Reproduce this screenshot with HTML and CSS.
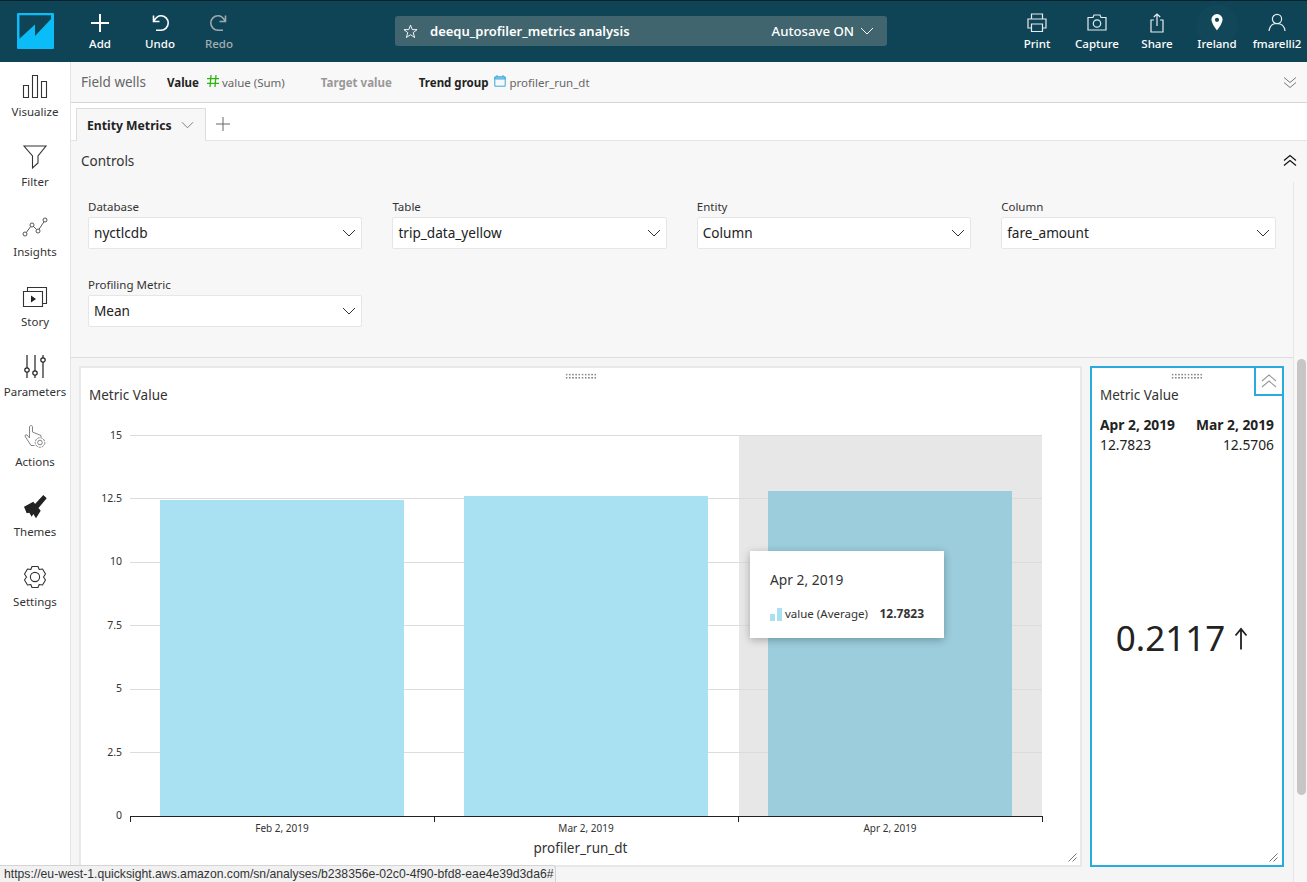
FILE: index.html
```html
<!DOCTYPE html>
<html lang="en">
<head>
<meta charset="utf-8">
<title>deequ_profiler_metrics analysis</title>
<link rel="stylesheet" href="styles.css">
</head>
<body>
<header class="topbar">
  <div class="logo-cell">
    <svg class="logo" viewBox="0 0 37 36"><rect width="37" height="36" rx="1" fill="#0abdf8"/><path d="M2.5 2.3H34V6L18 23V11.5L2.5 25.7Z" fill="#0f4457"/></svg>
  </div>
  <a class="tool"><svg class="ticon" viewBox="0 0 24 20"><path d="M12 1V19M3 10H21" stroke="#fff" stroke-width="2" fill="none"/></svg><span>Add</span></a>
  <a class="tool"><svg class="ticon" viewBox="0 0 24 20"><path d="M5.5 2.5V8.5H11.5M6 8C8 4 10.5 2.8 13 2.8A7.2 7.2 0 0 1 13 17.2H8" stroke="#fff" stroke-width="1.6" fill="none"/></svg><span>Undo</span></a>
  <a class="tool tool-off"><svg class="ticon" viewBox="0 0 24 20"><path d="M18.5 2.5V8.5H12.5M18 8C16 4 13.5 2.8 11 2.8A7.2 7.2 0 0 0 11 17.2H16" stroke="#9fa9ae" stroke-width="1.6" fill="none"/></svg><span>Redo</span></a>
  <div class="titlebar">
    <svg class="star" viewBox="0 0 16 16"><path d="M8 1.2L9.9 6H15L10.9 9.2L12.4 14.4L8 11.4L3.6 14.4L5.1 9.2L1 6H6.1Z" stroke="#fff" fill="none"/></svg>
    <span class="title-name">deequ_profiler_metrics analysis</span>
    <span class="autosave">Autosave ON</span>
    <svg class="title-chev" viewBox="0 0 14 8"><path d="M1 1L7 7L13 1" stroke="#fff" fill="none"/></svg>
  </div>
  <div class="tools-right">
    <a class="tool"><svg class="ticon" viewBox="0 0 24 20"><path d="M6.5 6V1H17.500V6M6.500 15H3V6H21V15H17.500M6.500 11H17.500V18.500H6.500Z" stroke="#e6ecee" stroke-width="1.2" fill="none"/></svg><span>Print</span></a>
    <a class="tool"><svg class="ticon" viewBox="0 0 24 20"><path d="M3 4.500H8L9 2H15L16 4.500H21V17H3Z" stroke="#e6ecee" stroke-width="1.2" fill="none"/><circle cx="12" cy="10.500" r="3.700" stroke="#e6ecee" stroke-width="1.2" fill="none"/></svg><span>Capture</span></a>
    <a class="tool"><svg class="ticon" viewBox="0 0 24 20"><path d="M9 7H6V19H18V7H15M12 13V1M8.800 4L12 1L15.200 4" stroke="#e6ecee" stroke-width="1.2" fill="none"/></svg><span>Share</span></a>
    <a class="tool tool-region"><svg class="ticon" viewBox="0 0 24 20"><path fill-rule="evenodd" d="M12 1A5.600 5.600 0 0 0 6.400 6.600C6.400 10.500 12 17.500 12 17.500S17.600 10.500 17.600 6.600A5.600 5.600 0 0 0 12 1ZM12 4.700A2.100 2.100 0 1 1 12 8.900A2.100 2.100 0 0 1 12 4.700Z" fill="#fff"/></svg><span>Ireland</span></a>
    <a class="tool"><svg class="ticon" viewBox="0 0 24 20"><circle cx="12" cy="6" r="4.600" stroke="#e6ecee" stroke-width="1.2" fill="none"/><path d="M4 18C4.500 13.500 7.500 10.500 12 10.500S19.500 13.500 20 18" stroke="#e6ecee" stroke-width="1.2" fill="none"/></svg><span>fmarelli2</span></a>
  </div>
</header>

<div class="shell">
  <nav class="sidebar">
    <a class="side-item"><svg class="sicon" viewBox="0 0 26 24"><path d="M1.500 10.500H6.500V22.500H1.500ZM10.500 .5H15.500V22.500H10.500ZM19.500 6.500H24.500V22.500H19.500Z" stroke="#333" stroke-width="1.1" fill="none"/></svg><span>Visualize</span></a>
    <a class="side-item"><svg class="sicon" viewBox="0 0 26 24"><path d="M2 1H24L16 11V18L10.500 23V11Z" stroke="#333" stroke-width="1.1" fill="none"/></svg><span>Filter</span></a>
    <a class="side-item"><svg class="sicon" viewBox="0 0 26 24"><g stroke="#444" stroke-width=".9" fill="none"><circle cx="3" cy="19" r="2"/><circle cx="10" cy="10" r="2"/><circle cx="16" cy="16" r="2"/><circle cx="23" cy="5" r="2"/><path d="M4.300 17.500L8.700 11.500M11.500 11.500L14.500 14.500M17 14.300L22 6.700"/></g></svg><span>Insights</span></a>
    <a class="side-item"><svg class="sicon" viewBox="0 0 26 24"><path d="M1.500 6.500H20.500V21.500H1.500ZM5.500 6.500V2.500H24.500V18.500H20.500" stroke="#333" stroke-width="1.1" fill="none"/><path d="M9 10.500L14 14L9 17.500Z" fill="#222"/></svg><span>Story</span></a>
    <a class="side-item"><svg class="sicon" viewBox="0 0 26 24"><g stroke="#222" stroke-width="1.2" fill="#fff"><path d="M5 0V23M13 0V23M21 0V23"/><circle cx="5" cy="15" r="2.200"/><circle cx="13" cy="18" r="2.200"/><circle cx="21" cy="5" r="2.200"/></g></svg><span>Parameters</span></a>
    <a class="side-item"><svg class="sicon" viewBox="0 0 26 24"><g stroke="#777" stroke-width=".9" fill="none"><path d="M7.500 13V2C7.500 0 10.500 0 10.500 2V7L19 10.500V12M7.500 13L5 10C3.500 9 2.500 10.500 3.500 12L9 20.500H12.500"/><circle cx="18" cy="17.500" r="4.800" stroke-dasharray="2.400 .8"/><circle cx="18" cy="17.500" r="2.300"/></g></svg><span>Actions</span></a>
    <a class="side-item"><svg class="sicon" viewBox="0 0 26 24"><path d="M21.300 0L24.700 3.300L16.300 13.300L13 9Z M11.300 6.700L18.700 15.700L14 23.300L11.300 19L9.700 21.700L7.300 17.700L4.700 18.300L2 11.700Z" fill="#222"/></svg><span>Themes</span></a>
    <a class="side-item"><svg class="sicon" viewBox="0 0 26 24"><path d="M10 1.500H16L17.200 4.500L20.500 4L23.500 9L21.500 12L23.500 15L20.500 20L17.200 19.500L16 22.500H10L8.800 19.500L5.500 20L2.500 15L4.500 12L2.500 9L5.500 4L8.800 4.500Z" stroke="#333" stroke-width="1.1" stroke-linejoin="round" fill="none"/><circle cx="13" cy="12" r="4.600" stroke="#333" stroke-width="1.1" fill="none"/></svg><span>Settings</span></a>
  </nav>

  <main class="main">
    <section class="wells">
      <span class="wells-title">Field wells</span>
      <b class="well-key well-value">Value</b>
      <svg class="well-hash" viewBox="0 0 12 12"><path d="M4 0L3 12M9 0L8 12M0 3.700H12M0 8.300H12" stroke="#2fb50f" stroke-width="1.3" fill="none"/></svg>
      <span class="well-field">value (Sum)</span>
      <b class="well-key well-target">Target value</b>
      <b class="well-key well-trend">Trend group</b>
      <svg class="well-cal" viewBox="0 0 12 12"><path d="M.8 2H11.200V11.200H.8Z" stroke="#3ca9dd" fill="none"/><path d="M.8 2H11.200V4H.8ZM3 0V2M9 0V2" stroke="#3ca9dd" fill="#9fd5ef"/></svg>
      <span class="well-field">profiler_run_dt</span>
      <svg class="dbl-chev" viewBox="0 0 14 13"><path d="M1 1.500L7 6.500L13 1.500M1 6.500L7 11.500L13 6.500" stroke="#777" fill="none"/></svg>
    </section>

    <section class="tabs">
      <div class="tab">
        <span>Entity Metrics</span>
        <svg class="tab-chev" viewBox="0 0 14 8"><path d="M1 1L7 7L13 1" stroke="#777" fill="none"/></svg>
      </div>
      <svg class="tab-add" viewBox="0 0 14 14"><path d="M7 0V14M0 7H14" stroke="#666" fill="none"/></svg>
    </section>

    <section class="controls-head">
      <span>Controls</span>
      <svg class="dbl-chev" viewBox="0 0 14 13"><path d="M1 6.500L7 1.500L13 6.500M1 11.500L7 6.500L13 11.500" stroke="#111" stroke-width="1.200" fill="none"/></svg>
    </section>

    <div class="scroller">
      <div class="scroll-content">
        <section class="controls">
          <div class="control"><label>Database</label><div class="select"><span>nyctlcdb</span><svg viewBox="0 0 14 8"><path d="M1 1L7 7L13 1" stroke="#333" fill="none"/></svg></div></div>
          <div class="control"><label>Table</label><div class="select"><span>trip_data_yellow</span><svg viewBox="0 0 14 8"><path d="M1 1L7 7L13 1" stroke="#333" fill="none"/></svg></div></div>
          <div class="control"><label>Entity</label><div class="select"><span>Column</span><svg viewBox="0 0 14 8"><path d="M1 1L7 7L13 1" stroke="#333" fill="none"/></svg></div></div>
          <div class="control"><label>Column</label><div class="select"><span>fare_amount</span><svg viewBox="0 0 14 8"><path d="M1 1L7 7L13 1" stroke="#333" fill="none"/></svg></div></div>
          <div class="control"><label>Profiling Metric</label><div class="select"><span>Mean</span><svg viewBox="0 0 14 8"><path d="M1 1L7 7L13 1" stroke="#333" fill="none"/></svg></div></div>
        </section>

        <section class="sheet">
          <article class="visual chart-visual">
            <div class="grip"></div>
            <h2 class="visual-title">Metric Value</h2>
            <svg class="chart" viewBox="81 415 998 449">
              <rect x="739" y="435" width="303" height="381" fill="#e7e7e7"/>
              <path d="M130 435.500H1042M130 498.500H1042M130 562.500H1042M130 625.500H1042M130 689.500H1042M130 752.500H1042" stroke="#dcdcdc"/>
              <rect x="160" y="500" width="244" height="316" fill="#a9e1f3"/>
              <rect x="464" y="496" width="244" height="320" fill="#a9e1f3"/>
              <rect x="768" y="491" width="244" height="325" fill="#9bcddd"/>
              <path d="M130 816.500H1042M130.500 816V822M434.500 816V822M738.500 816V822M1042.500 816V822" stroke="#222" fill="none"/>
              <g class="axis-y">
                <text x="122" y="439">15</text>
                <text x="122" y="502">12.5</text>
                <text x="122" y="565">10</text>
                <text x="122" y="629">7.5</text>
                <text x="122" y="692">5</text>
                <text x="122" y="756">2.5</text>
                <text x="122" y="819">0</text>
              </g>
              <g class="axis-x">
                <text x="282" y="832">Feb 2, 2019</text>
                <text x="586" y="832">Mar 2, 2019</text>
                <text x="890" y="832">Apr 2, 2019</text>
              </g>
              <text class="axis-name" x="580.500" y="853">profiler_run_dt</text>
            </svg>
            <div class="tip">
              <div class="tip-date">Apr 2, 2019</div>
              <div class="tip-row">
                <svg class="tip-key" viewBox="0 0 12 13"><rect y="6" width="5" height="7" fill="#a9e1f3"/><rect x="7" width="5" height="13" fill="#a9e1f3"/></svg>
                <span class="tip-name">value (Average)</span>
                <b>12.7823</b>
              </div>
            </div>
            <svg class="resize" viewBox="0 0 9 9"><path d="M.5 8.500L8.500 .5M4.500 8.500L8.500 4.500" stroke="#777" fill="none"/></svg>
          </article>

          <article class="visual kpi-visual">
            <div class="grip"></div>
            <div class="kpi-toggle"><svg viewBox="0 0 16 14"><path d="M1 7L8 1L15 7M1 13L8 7L15 13" stroke="#999" stroke-width="1.100" fill="none"/></svg></div>
            <h2 class="visual-title">Metric Value</h2>
            <div class="kpi-compare">
              <b>Apr 2, 2019</b><b>Mar 2, 2019</b>
              <span>12.7823</span><span>12.5706</span>
            </div>
            <div class="kpi-big">
              <span>0.2117</span>
              <svg viewBox="0 0 14 22"><path d="M7 22V1.500M1.500 8L7 1.500L12.500 8" stroke="#222" stroke-width="1.800" fill="none"/></svg>
            </div>
            <svg class="resize" viewBox="0 0 9 9"><path d="M.5 8.500L8.500 .5M4.500 8.500L8.500 4.500" stroke="#777" fill="none"/></svg>
          </article>
        </section>
      </div>
      <div class="gutter"><div class="thumb"></div></div>
    </div>
  </main>
</div>

<div class="status">https://eu-west-1.quicksight.aws.amazon.com/sn/analyses/b238356e-02c0-4f90-bfd8-eae4e39d3da6#</div>
</body>
</html>
```

FILE: styles.css
```css
* { box-sizing: border-box; }
html, body { margin: 0; height: 100%; overflow: hidden; }
body {
  font-family: "Noto Sans", "Open Sans", sans-serif;
  color: #222;
  background: #fff;
  display: flex;
  flex-direction: column;
  width: 1307px;
  height: 882px;
}

/* top bar */
.topbar {
  height: 62px;
  flex: none;
  display: flex;
  background: #0f4457;
  border-top: 1px solid #06222c;
  color: #fff;
}
.logo-cell { width: 70px; flex: none; padding: 12px 0 0 17px; }
.logo { width: 37px; height: 36px; display: block; }
.tool {
  width: 60px;
  flex: none;
  display: flex;
  flex-direction: column;
  align-items: center;
  padding-top: 12px;
  font-size: 11.5px;
  font-weight: 500;
  line-height: 16px;
  white-space: nowrap;
}
.ticon { width: 24px; height: 20px; margin-bottom: 3px; display: block; }
.tool-off { color: #a5aeb3; margin-left: -1px; }
.tool-region { background: radial-gradient(circle at 50% 40%, #124759 0 20px, transparent 21px); }
.titlebar {
  width: 492px;
  height: 30px;
  margin: 15px 0 0 146px;
  flex: none;
  background: #41656f;
  border-radius: 3px;
  display: flex;
  align-items: center;
  padding: 0 13px 0 8px;
}
.star { width: 15px; height: 15px; margin-right: 12px; flex: none; }
.title-name { font-weight: 600; font-size: 13px; }
.autosave { margin-left: auto; font-weight: 500; font-size: 13.2px; }
.title-chev { width: 14px; height: 8px; margin-left: 6px; flex: none; }
.tools-right { margin-left: auto; display: flex; }

/* shell */
.shell { flex: 1; display: flex; min-height: 0; }
.sidebar {
  width: 71px;
  flex: none;
  background: #fff;
  border-right: 1px solid #e4e4e4;
  padding-top: 1px;
}
.side-item {
  height: 70px;
  display: flex;
  flex-direction: column;
  align-items: center;
  padding-top: 12px;
  font-size: 11.5px;
  line-height: 16px;
  color: #333;
}
.sicon { width: 26px; height: 24px; margin-bottom: 5px; display: block; }

.main { flex: 1; min-width: 0; display: flex; flex-direction: column; background: #f7f7f7; }

/* field wells */
.wells {
  height: 41px;
  flex: none;
  display: flex;
  align-items: center;
  padding: 0 10px;
  background: #f8f8f8;
  border-bottom: 1px solid #d6d6d6;
  font-size: 11.5px;
}
.wells-title { font-size: 13.5px; color: #666; width: 86px; }
.well-key { font-weight: 700; color: #222; }
.well-value { margin-right: 8px; }
.well-hash { width: 12px; height: 12px; margin: -3px 3px 0 0; }
.well-field { color: #666; }
.well-target { color: #999; margin: 0 27px 0 36px; }
.well-cal { width: 12px; height: 12px; margin: -2px 3px 0 6px; }
.dbl-chev { width: 14px; height: 13px; flex: none; margin-left: auto; }

/* tabs */
.tabs {
  height: 38px;
  flex: none;
  display: flex;
  align-items: flex-end;
  background: #fff;
  border-bottom: 1px solid #e4e4e4;
  padding-left: 5px;
}
.tab {
  width: 130px;
  height: 33px;
  margin-bottom: -1px;
  display: flex;
  align-items: center;
  gap: 9px;
  padding-left: 10px;
  background: #f7f7f7;
  border: 1px solid #dcdcdc;
  border-bottom: 0;
  font-size: 12.2px;
  font-weight: 700;
  color: #222;
}
.tab-chev { width: 13px; height: 8px; }
.tab-add { width: 14px; height: 14px; margin: 0 0 9px 10px; }

/* controls */
.controls-head {
  height: 41px;
  flex: none;
  display: flex;
  align-items: center;
  padding: 0 10px 2px;
  font-size: 13.5px;
  color: #333;
}
.scroller { flex: 1; min-height: 0; display: flex; }
.scroll-content { flex: 1; min-width: 0; display: flex; flex-direction: column; }
.gutter { width: 14px; flex: none; border-left: 1px solid #e6e6e6; padding: 177px 0 0 3px; }
.thumb { width: 9px; height: 436px; background: #c6c6c6; border-radius: 5px; }
.controls {
  height: 176px;
  flex: none;
  display: grid;
  grid-template-columns: repeat(4, 274.4px);
  column-gap: 30px;
  align-content: start;
  row-gap: 27px;
  padding: 16px 0 0 17px;
  border-bottom: 1px solid #dedede;
}
.control label { display: block; font-size: 11.5px; line-height: 18px; color: #333; margin-bottom: 1px; }
.select {
  height: 32px;
  display: flex;
  align-items: center;
  justify-content: space-between;
  padding: 0 5px;
  background: #fff;
  border: 1px solid #e6e6e6;
  border-radius: 2px;
  font-size: 13.6px;
  color: #222;
}
.select span { margin-top: -1px; }
.select svg { width: 14px; height: 8px; flex: none; }

/* visuals */
.sheet {
  flex: 1;
  min-height: 0;
  display: flex;
  gap: 8px;
  padding: 8px 9px 15px 8px;
  background: #f5f5f5;
}
.visual { position: relative; background: #fff; border: 2px solid #e8e8e8; display: flex; flex-direction: column; }
.chart-visual { flex: 1; min-width: 0; }
.kpi-visual { width: 194px; flex: none; border-color: #29abe0; }
.visual-title { margin: 18px 0 0 8px; font-size: 13.5px; line-height: 18px; font-weight: 400; color: #333; height: 29px; flex: none; }
.grip {
  position: absolute;
  top: 5px;
  left: 50%;
  width: 32px;
  height: 6px;
  margin-left: -16px;
  background-image: radial-gradient(circle, #888 0.8px, transparent 1px);
  background-size: 3.2px 3.2px;
}
.chart { width: 998px; height: 449px; display: block; flex: none; }
.chart text { font-family: "Noto Sans", sans-serif; fill: #333; }
.axis-y text { font-size: 10.5px; text-anchor: end; }
.axis-x text { font-size: 10px; text-anchor: middle; }
.chart .axis-name { font-size: 13.5px; text-anchor: middle; }
.tip {
  position: absolute;
  left: 669px;
  top: 183px;
  width: 194px;
  height: 87px;
  padding: 20px 20px 0;
  background: #fff;
  box-shadow: 0 2px 8px rgba(0, 0, 0, .28);
}
.tip-date { font-size: 13.8px; line-height: 18px; color: #333; }
.tip-row { display: flex; align-items: center; margin-top: 17px; font-size: 11.5px; line-height: 16px; color: #333; }
.tip-key { width: 12px; height: 13px; margin-right: 3px; flex: none; }
.tip-name { flex: 1; }
.tip-row b { font-weight: 700; font-size: 12px; }
.resize { position: absolute; right: 3px; bottom: 3px; width: 9px; height: 9px; }
.kpi-visual .resize { right: 4px; }
.kpi-toggle {
  position: absolute;
  top: -2px;
  right: -2px;
  width: 30px;
  height: 30px;
  border: 2px solid #29abe0;
  display: flex;
  align-items: center;
  justify-content: center;
}
.kpi-toggle svg { width: 16px; height: 14px; }
.kpi-compare {
  display: grid;
  grid-template-columns: 1fr auto;
  padding: 0 8px;
  font-size: 13.8px;
  line-height: 20px;
  color: #222;
}
.kpi-compare > :nth-child(even) { text-align: right; }
.kpi-compare b { font-weight: 700; }
.kpi-big {
  display: flex;
  align-items: center;
  justify-content: center;
  gap: 9px;
  margin-top: 161px;
  padding-right: 10px;
  font-size: 35px;
  line-height: 44px;
  color: #222;
}
.kpi-big svg { width: 14px; height: 23px; }

/* link preview */
.status {
  position: fixed;
  left: 0;
  bottom: 0;
  width: 556px;
  height: 17px;
  padding: 0 0 0 4px;
  background: #f1f1f1;
  border: 1px solid #d4d4d4;
  border-left: 0;
  border-bottom: 0;
  border-top-right-radius: 3px;
  font-family: "Liberation Sans", Arial, sans-serif;
  font-size: 12.2px;
  line-height: 16px;
  color: #333;
  white-space: nowrap;
}
```
